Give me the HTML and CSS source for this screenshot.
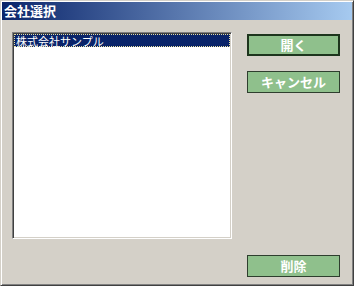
FILE: index.html
```html
<!DOCTYPE html>
<html lang="ja">

<head>
    <meta charset="UTF-8">
    <title>会社選択</title>
    <link rel="stylesheet" href="styles.css">
</head>

<body>
<div id="dialog">
    <div id="dialog-title">会社選択</div>
    <div id="dialog-body">
        <div id="company-list">
            <div class="list-item selected">株式会社サンプル</div>
        </div>
        <div id="button-column">
            <button class="dlg-btn default">開く</button>
            <button class="dlg-btn">キャンセル</button>
            <div class="spacer"></div>
            <button class="dlg-btn">削除</button>
        </div>
    </div>
</div>
</body>

</html>
```

FILE: styles.css
```css
body {
    margin: 0;
    width: 354px;
    height: 286px;
    background-color: #d4d0c8;
    font-family: "Noto Sans CJK JP", "Noto Sans", sans-serif;
}

#dialog {
    box-sizing: border-box;
    width: 354px;
    height: 286px;
    display: flex;
    flex-direction: column;
    border: 1px solid;
    border-color: #d4d0c8 #404040 #404040 #d4d0c8;
    box-shadow: inset 1px 1px #ffffff, inset -1px -1px #808080;
    padding: 1px;
}

#dialog-title {
    height: 18px;
    line-height: 18px;
    padding-left: 2px;
    color: white;
    font-weight: bold;
    font-size: 13px;
    background: linear-gradient(to right, #0a246a, #a6caf0);
}

#dialog-body {
    flex: 1;
    display: flex;
    padding: 12px 11px 7px 10px;
}

#company-list {
    box-sizing: border-box;
    width: 220px;
    height: 207px;
    background-color: white;
    border: 1px solid;
    border-color: #808080 #ffffff #ffffff #808080;
    box-shadow: inset 1px 1px #404040, inset -1px -1px #d4d0c8;
    padding: 1px;
}

.list-item {
    height: 13px;
    line-height: 12px;
    font-size: 11px;
    padding-left: 1px;
    color: #000;
}

.list-item.selected {
    box-sizing: border-box;
    background-color: #0a246a;
    color: white;
    border: 1px dotted #e8e0a0;
}

#button-column {
    display: flex;
    flex-direction: column;
    margin-left: 15px;
    padding-top: 2px;
}

.spacer {
    flex: 1;
}

.dlg-btn {
    box-sizing: border-box;
    width: 93px;
    height: 22px;
    margin-bottom: 15px;
    padding: 0;
    background-color: #8fc08c;
    border: 1px solid #2e3e2e;
    color: white;
    font-family: "Noto Sans CJK JP", "Noto Sans", sans-serif;
    font-weight: bold;
    font-size: 13px;
    line-height: 18px;
}

.dlg-btn.default {
    border: 2px solid #1d351d;
}

.dlg-btn:last-child {
    margin-bottom: 0;
}
```
